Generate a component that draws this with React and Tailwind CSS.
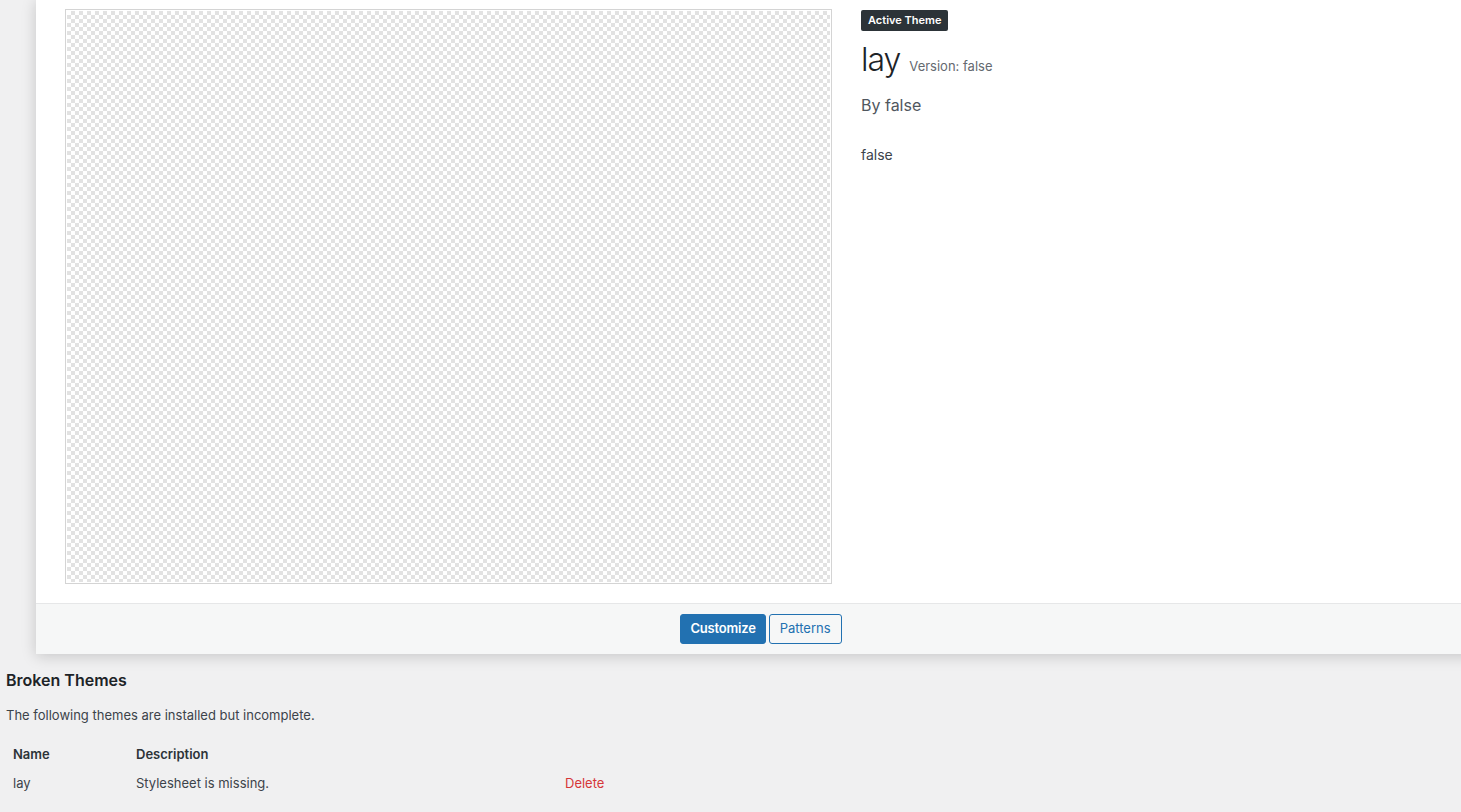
export default function App() {
  const font = { fontFamily: 'Inter, "Liberation Sans", Arial, sans-serif' };
  return (
    <div className="w-[1461px] h-[812px] overflow-hidden bg-[#f0f0f1] text-[#3c434a]" style={font}>
      <div className="ml-[36px] w-[1450px] bg-white shadow-[0_2px_14px_rgba(0,0,0,0.18)]">
        <div className="flex pt-[9px] pl-[29px] pb-[19px]">
          <div className="w-[767px] h-[575px] border border-[#d4d4d4] p-px shrink-0">
            <div className="w-full h-full bg-[image:conic-gradient(#e2e2e2_25%,#ffffff_0_50%,#e2e2e2_0_75%,#ffffff_0)] bg-[length:8px_8px]" />
          </div>
          <div className="ml-[29px] pt-px">
            <div className="w-fit bg-[#2c3338] text-white text-[11px] font-semibold leading-[21px] px-[7px] rounded-[2px]">Active Theme</div>
            <div className="mt-[9px] flex items-baseline">
              <span className="text-[32px] font-light leading-[40px] tracking-[-1px] text-[#1d2327]">lay</span>
              <span className="ml-[9px] text-[13px] text-[#646970]">Version: false</span>
            </div>
            <div className="mt-[15px] text-[16px] leading-[20px] text-[#50575e]">By false</div>
            <div className="mt-[30px] text-[14px] leading-[20px] text-[#3c434a]">false</div>
          </div>
        </div>
        <div className="border-t border-[#e6e7e8] bg-[#f6f7f7] h-[51px] flex items-center justify-center gap-[3px]">
          <button className="h-[30px] px-[9px] rounded-[3px] bg-[#2271b1] border border-[#2271b1] text-white text-[13px] font-semibold tracking-[-0.2px]">Customize</button>
          <button className="h-[30px] px-[10px] rounded-[3px] bg-[#f6f7f7] border border-[#2271b1] text-[#2271b1] text-[13px]">Patterns</button>
        </div>
      </div>
      <div className="pl-[6px] pt-[16px]">
        <h3 className="text-[16px] font-semibold text-[#1d2327] leading-[20px]">Broken Themes</h3>
        <p className="mt-[16px] text-[13px] leading-[18px] text-[#3c434a]">The following themes are installed but incomplete.</p>
      </div>
      <div className="mt-[21px] pl-[13px] text-[13px] text-[#3c434a]">
        <div className="flex leading-[18px] font-semibold text-[#2c3338]">
          <div className="w-[123px]">Name</div>
          <div className="w-[429px]">Description</div>
        </div>
        <div className="flex mt-[11px] leading-[18px]">
          <div className="w-[123px]">lay</div>
          <div className="w-[429px]">Stylesheet is missing.</div>
          <div className="text-[#d63638]">Delete</div>
        </div>
      </div>
    </div>
  );
}
